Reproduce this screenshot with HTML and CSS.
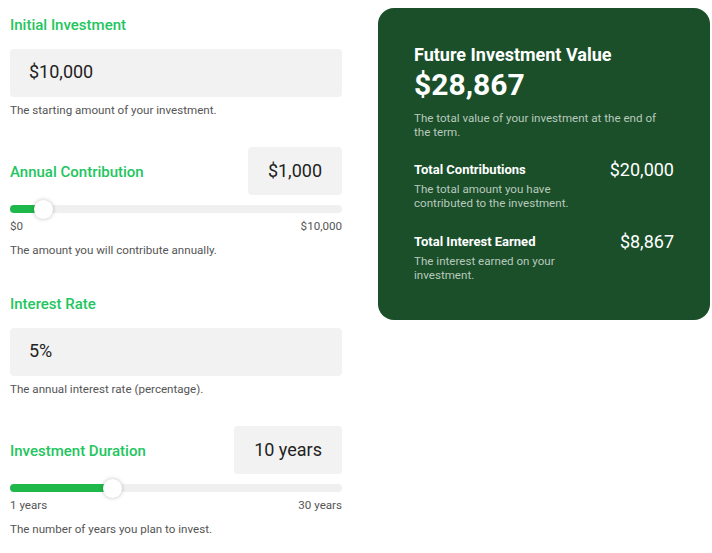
FILE: index.html
```html
<!DOCTYPE html>
<html>
<head>
  <title>Investment Calculator</title>
  <meta charset="UTF-8">
  <link rel="stylesheet" href="styles.css">
</head>
<body>
  <div class="calc">
    <div class="inputs">
      <div class="field">
        <div class="field-label">Initial Investment</div>
        <div class="text-input">$10,000</div>
        <p class="help">The starting amount of your investment.</p>
      </div>

      <div class="field">
        <div class="field-row">
          <span class="row-label">Annual Contribution</span>
          <span class="value-box">$1,000</span>
        </div>
        <div class="slider">
          <div class="slider-fill" style="width: 10%"></div>
          <div class="slider-thumb" style="left: 10%"></div>
        </div>
        <div class="range-labels"><span>$0</span><span>$10,000</span></div>
        <p class="help help-slider">The amount you will contribute annually.</p>
      </div>

      <div class="field">
        <div class="field-label">Interest Rate</div>
        <div class="text-input">5%</div>
        <p class="help">The annual interest rate (percentage).</p>
      </div>

      <div class="field">
        <div class="field-row">
          <span class="row-label">Investment Duration</span>
          <span class="value-box">10 years</span>
        </div>
        <div class="slider">
          <div class="slider-fill" style="width: 31%"></div>
          <div class="slider-thumb" style="left: 31%"></div>
        </div>
        <div class="range-labels"><span>1 years</span><span>30 years</span></div>
        <p class="help help-slider">The number of years you plan to invest.</p>
      </div>
    </div>

    <div class="result-card">
      <h3>Future Investment Value</h3>
      <div class="big-value">$28,867</div>
      <p class="card-desc">The total value of your investment at the end of the term.</p>

      <div class="result-row">
        <div class="result-text">
          <strong>Total Contributions</strong>
          <p class="card-desc">The total amount you have contributed to the investment.</p>
        </div>
        <span class="result-value">$20,000</span>
      </div>

      <div class="result-row">
        <div class="result-text">
          <strong>Total Interest Earned</strong>
          <p class="card-desc">The interest earned on your investment.</p>
        </div>
        <span class="result-value">$8,867</span>
      </div>
    </div>
  </div>
</body>
</html>
```

FILE: styles.css
```css
body {
  margin: 0;
  font-family: Roboto, "Liberation Sans", Arial, sans-serif;
  background-color: #fff;
  color: #222;
}
.calc {
  display: grid;
  grid-template-columns: 332px 332px;
  column-gap: 36px;
  align-items: start;
  padding: 8px 0 0 10px;
}
.field {
  margin-bottom: 29px;
}
.field-label, .row-label {
  color: #22c55e;
  font-size: 15px;
  font-weight: 500;
}
.field-label {
  height: 32px;
  display: flex;
  align-items: center;
  padding-top: 2px;
  box-sizing: border-box;
  margin-bottom: 9px;
}
.text-input {
  height: 48px;
  background-color: #f2f2f2;
  border-radius: 4px;
  padding: 0 19px 3px;
  box-sizing: border-box;
  display: flex;
  align-items: center;
  font-size: 18px;
}
.help {
  margin: 5px 0 0;
  font-size: 11.6px;
  line-height: 16px;
  color: #555;
}
.help-slider {
  margin-top: 8px;
}
.field-row {
  display: flex;
  justify-content: space-between;
  align-items: center;
}
.row-label {
  padding-top: 2px;
}
.value-box {
  height: 48px;
  background-color: #f2f2f2;
  border-radius: 4px;
  padding: 0 20px 2px;
  box-sizing: border-box;
  display: flex;
  align-items: center;
  font-size: 18px;
}
.slider {
  position: relative;
  height: 8px;
  margin-top: 10px;
  background-color: #f0f0f0;
  border-radius: 4px;
}
.slider-fill {
  height: 100%;
  background-color: #1fb84a;
  border-radius: 4px;
}
.slider-thumb {
  position: absolute;
  top: 50%;
  width: 19px;
  height: 19px;
  margin: -9.5px 0 0 -9.5px;
  background-color: #fff;
  border-radius: 50%;
  box-shadow: 0 0 4px rgba(0, 0, 0, 0.25);
}
.range-labels {
  display: flex;
  justify-content: space-between;
  margin-top: 5px;
  font-size: 11.6px;
  line-height: 16px;
  color: #555;
}
.result-card {
  background-color: #1a4f2a;
  color: #fff;
  border-radius: 16px;
  padding: 36px 36px 38px;
}
.result-card h3 {
  margin: 0;
  font-size: 18px;
  line-height: 22px;
  font-weight: 700;
}
.big-value {
  margin-top: 1px;
  font-size: 30px;
  line-height: 36px;
  font-weight: 700;
}
.card-desc {
  margin: 8px 0 0;
  font-size: 11.6px;
  line-height: 14px;
  color: #b9c9bc;
}
.result-row {
  display: flex;
  justify-content: space-between;
  align-items: flex-start;
  margin-top: 22px;
}
.result-row + .result-row {
  margin-top: 23px;
}
.result-text {
  width: 175px;
}
.result-text strong {
  display: block;
  font-size: 13px;
  line-height: 18px;
  font-weight: 700;
}
.result-text .card-desc {
  margin-top: 3px;
}
.result-value {
  font-size: 18px;
  line-height: 18px;
}
```
